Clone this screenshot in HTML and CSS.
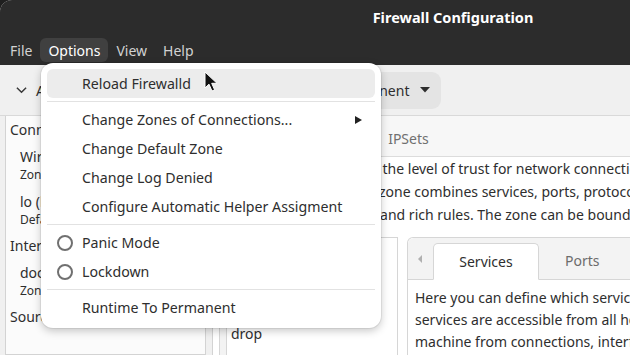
FILE: index.html
```html
<!DOCTYPE html>
<html lang="en">

<head>
    <meta charset="UTF-8">
    <meta name="viewport" content="width=device-width, initial-scale=1.0">
    <title>Firewall Configuration</title>
    <link rel="stylesheet" href="styles.css">
</head>

<body>
    <div class="window">
        <header class="titlebar">
            <div class="title">Firewall Configuration</div>
            <nav class="menubar">
                <span class="menu-title">File</span>
                <span class="menu-title open">Options</span>
                <span class="menu-title">View</span>
                <span class="menu-title">Help</span>
            </nav>
        </header>

        <div class="toolbar">
            <div class="bindings-toggle">
                <svg viewBox="0 0 12 8" class="chevron">
                    <path d="M1 1.5 L6 6.5 L11 1.5" />
                </svg>
                Active Bindings
            </div>
            <div class="config-select">
                <span class="config-label">Configuration:</span>
                <div class="combo">
                    Permanent
                    <svg viewBox="0 0 10 6" class="combo-arrow">
                        <path d="M0 0 H10 L5 5.5 Z" />
                    </svg>
                </div>
            </div>
        </div>

        <div class="main">
            <aside class="bindings">
                <div class="bind-head">Connections</div>
                <div class="bind-item">
                    <div class="bind-name">Wired connection 1 (enp1s0)</div>
                    <div class="bind-zone">Zone: public</div>
                </div>
                <div class="bind-item">
                    <div class="bind-name">lo (lo)</div>
                    <div class="bind-zone">Default Zone: public</div>
                </div>
                <div class="bind-head">Interfaces</div>
                <div class="bind-item">
                    <div class="bind-name">docker0</div>
                    <div class="bind-zone">Zone: docker</div>
                </div>
                <div class="bind-head">Sources</div>
            </aside>

            <div class="pane-handle"></div>

            <section class="workspace">
                <div class="top-tabs">
                    <span class="top-tab active">Zones</span>
                    <span class="top-tab">Services</span>
                    <span class="top-tab">IPSets</span>
                </div>
                <p class="zone-desc">
                    A firewalld zone defines the level of trust for network connections, interfaces and source addresses<br>
                    bound to the zone. The zone combines services, ports, protocols, masquerade, port/packet<br>
                    forwarding, icmp filters and rich rules. The zone can be bound to interfaces and source addresses.
                </p>
                <div class="zone-area">
                    <div class="zone-frame">
                        <ul class="zone-list">
                            <li>block</li>
                            <li>dmz</li>
                            <li>docker</li>
                            <li>drop</li>
                        </ul>
                    </div>
                    <div class="zone-notebook">
                        <div class="nb-tabs">
                            <svg viewBox="0 0 4 8" class="nb-scroll">
                                <path d="M4 0 V8 L0 4 Z" />
                            </svg>
                            <span class="nb-tab active">Services</span>
                            <span class="nb-tab">Ports</span>
                            <span class="nb-tab">Protocols</span>
                            <span class="nb-tab">Source Port</span>
                        </div>
                        <p class="nb-text">
                            Here you can define which services are trusted in the zone. Trusted<br>
                            services are accessible from all hosts and networks that can reach the<br>
                            machine from connections, interfaces and sources bound to this zone.
                        </p>
                    </div>
                </div>
            </section>
        </div>
    </div>

    <!-- Options menu (open) -->
    <div class="popup-menu">
        <div class="menu-item hover"><span class="slot"></span>Reload Firewalld</div>
        <div class="menu-sep"></div>
        <div class="menu-item">
            <span class="slot"></span>Change Zones of Connections...
            <svg viewBox="0 0 7 8" class="sub-arrow">
                <path d="M0 0 L7 4 L0 8 Z" />
            </svg>
        </div>
        <div class="menu-item"><span class="slot"></span>Change Default Zone</div>
        <div class="menu-item"><span class="slot"></span>Change Log Denied</div>
        <div class="menu-item"><span class="slot"></span>Configure Automatic Helper Assigment</div>
        <div class="menu-sep"></div>
        <div class="menu-item"><span class="slot radio"></span>Panic Mode</div>
        <div class="menu-item"><span class="slot radio"></span>Lockdown</div>
        <div class="menu-sep"></div>
        <div class="menu-item"><span class="slot"></span>Runtime To Permanent</div>
    </div>

    <svg viewBox="0 0 14 22" class="cursor">
        <path d="M1 1 V17 L5 13.2 L8 20 L10.6 18.8 L7.7 12.3 H13 Z" />
    </svg>
</body>

</html>
```

FILE: styles.css
```css
* {
    margin: 0;
    padding: 0;
    box-sizing: border-box;
}

html,
body {
    width: 630px;
    height: 355px;
    overflow: hidden;
    background: #1f1f1f;
    font-family: 'Noto Sans', 'DejaVu Sans', sans-serif;
    font-size: 14px;
    color: #2e2e2e;
}

.window {
    width: 906px;
    height: 355px;
    display: flex;
    flex-direction: column;
    background: #f0f0f0;
    border-top-left-radius: 12px;
    overflow: hidden;
}

/* header */

.titlebar {
    height: 65px;
    flex: none;
    background: #2c2c2c;
    color: #ffffff;
}

.title {
    height: 36px;
    line-height: 34px;
    text-align: center;
    font-weight: 700;
    font-size: 14.5px;
}

.menubar {
    display: flex;
    padding: 2px 2px 3px;
}

.menu-title {
    height: 24px;
    line-height: 25px;
    padding: 0 8px;
    border-radius: 6px;
    color: #d2d2d2;
}

.menu-title.open {
    background: #404040;
    color: #ffffff;
}

/* toolbar */

.toolbar {
    height: 51px;
    flex: none;
    display: flex;
    align-items: center;
    padding-left: 16px;
    border-bottom: 1px solid #d9d9d9;
}

.bindings-toggle {
    display: flex;
    align-items: center;
    gap: 9px;
}

.chevron {
    width: 11px;
    height: 8px;
    fill: none;
    stroke: #3a3a3a;
    stroke-width: 1.6;
}

.config-select {
    display: flex;
    align-items: center;
    gap: 10px;
    margin-left: 82px;
}

.combo {
    height: 37px;
    display: flex;
    align-items: center;
    gap: 11px;
    padding: 0 11px 0 13px;
    border-radius: 9px;
    background: #e4e4e4;
}

.combo-arrow {
    width: 10px;
    height: 6px;
    fill: #2e2e2e;
}

/* main panes */

.main {
    flex: 1;
    display: flex;
    min-height: 0;
}

.bindings {
    width: 201px;
    flex: none;
    margin-left: 5px;
    padding: 1px 0 0 4px;
    background: #fbfbfb;
    border: 1px solid #d3d3d3;
    border-top: none;
}

.bind-head {
    line-height: 26px;
}

.bind-item {
    padding: 4px 0 5px 10px;
    white-space: nowrap;
}

.bind-name {
    line-height: 20px;
}

.bind-zone {
    font-size: 12px;
    line-height: 16px;
}

.pane-handle {
    width: 6px;
    flex: none;
}

.workspace {
    flex: 1;
    display: flex;
    flex-direction: column;
    min-height: 0;
    background: #ffffff;
    border-left: 1px solid #d3d3d3;
}

.top-tabs {
    height: 41px;
    flex: none;
    display: flex;
    align-items: center;
    padding: 5px 0 0 2px;
    background: #f7f7f7;
    border-bottom: 1px solid #dcdcdc;
}

.top-tab {
    padding: 0 16px;
    color: #707070;
}

.top-tab.active {
    color: #2e2e2e;
}

.zone-desc {
    flex: none;
    padding: 0 0 0 10px;
    line-height: 23px;
    white-space: nowrap;
}

.zone-area {
    flex: 1;
    min-height: 0;
    display: flex;
    gap: 9px;
    padding: 11px 0 0 6px;
}

.zone-frame {
    width: 179px;
    flex: none;
    padding-left: 6px;
    background: #f3f3f3;
    border: 1px solid #d6d6d6;
    border-bottom: none;
}

.zone-list {
    height: 100%;
    list-style: none;
    padding: 1px 0 0 4px;
    background: #ffffff;
    border-left: 1px solid #d6d6d6;
}

.zone-list li {
    line-height: 27px;
}

.zone-notebook {
    flex: 1;
    background: #ffffff;
    border: 1px solid #d6d6d6;
    border-bottom: none;
    border-top-left-radius: 6px;
}

.nb-tabs {
    height: 42px;
    display: flex;
    align-items: flex-end;
    padding-left: 10px;
    background: #f3f3f3;
    border-bottom: 1px solid #d6d6d6;
    border-top-left-radius: 6px;
}

.nb-scroll {
    width: 4px;
    height: 8px;
    fill: #b0b0b0;
    align-self: center;
    margin-right: 11px;
}

.nb-tab {
    height: 37px;
    line-height: 36px;
    padding: 0 26px;
    color: #6c6c6c;
    margin-bottom: -1px;
}

.nb-tab.active {
    width: 106px;
    padding: 0;
    text-align: center;
    color: #2e2e2e;
    background: #ffffff;
    border: 1px solid #d6d6d6;
    border-bottom: 1px solid #ffffff;
    border-radius: 5px 5px 0 0;
}

.nb-text {
    padding: 7px 0 0 7px;
    line-height: 22px;
    white-space: nowrap;
}

/* popup menu */

.popup-menu {
    position: absolute;
    left: 41px;
    top: 63px;
    width: 340px;
    padding: 6px;
    background: #ffffff;
    border-radius: 12px;
    box-shadow: 0 0 0 1px rgba(0, 0, 0, 0.06), 0 3px 9px rgba(0, 0, 0, 0.22);
}

.menu-item {
    height: 29px;
    display: flex;
    align-items: center;
    padding: 0 13px 0 10px;
    border-radius: 6px;
    color: #2e2e2e;
    white-space: nowrap;
    font-size: 14.2px;
}

.menu-item.hover {
    background: #ececec;
}

.slot {
    width: 16px;
    height: 16px;
    margin-right: 9px;
    flex: none;
}

.slot.radio {
    border: 2px solid #707070;
    border-radius: 50%;
}

.sub-arrow {
    width: 7px;
    height: 8px;
    margin-left: auto;
    fill: #222222;
}

.menu-sep {
    height: 1px;
    margin: 3px 0;
    background: #e2e2e2;
}

.cursor {
    position: absolute;
    left: 204px;
    top: 71px;
    width: 14px;
    height: 22px;
    fill: #111111;
    stroke: #ffffff;
    stroke-width: 1;
}
```
